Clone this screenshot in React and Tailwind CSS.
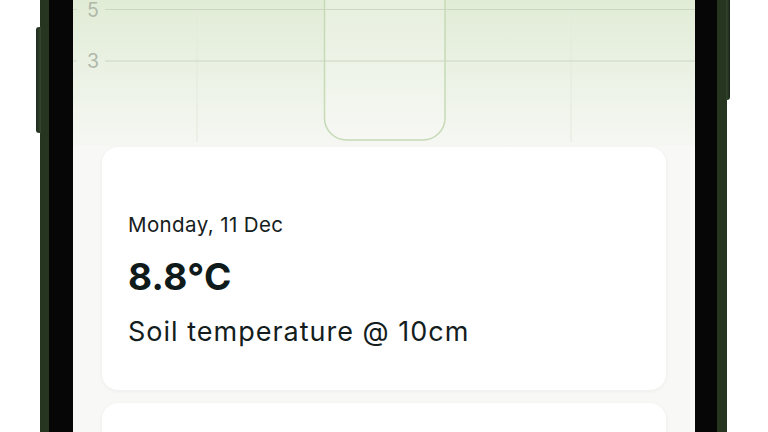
import React from 'react'

const GRID_Y = [
  { y: 9.5, label: '5' },
  { y: 61, label: '3' },
]

function SoilChart() {
  return (
    <div className="h-[146px] bg-gradient-to-b from-[#e1ecd6] via-[#ebf2e5] via-50% to-[#f6f7f3]">
      <svg width="622" height="146" viewBox="0 0 622 146" className="block">
        {/* vertical grid */}
        <line x1="124" y1="0" x2="124" y2="142" stroke="#e2ebda" strokeWidth="1" />
        <line x1="498" y1="0" x2="498" y2="142" stroke="#e2ebda" strokeWidth="1" />

        {/* selected bar */}
        <path
          d="M251.5 -2 V118 A22 22 0 0 0 273.5 140 H350 A22 22 0 0 0 372 118 V-2"
          fill="rgba(255,255,255,0.2)"
          stroke="#c6dab5"
          strokeWidth="1.5"
        />

        {/* horizontal grid + labels */}
        {GRID_Y.map((g) => (
          <g key={g.label}>
            <line x1="0" y1={g.y} x2="4" y2={g.y} stroke="#cfdac8" strokeWidth="1" />
            <line x1="32" y1={g.y} x2="622" y2={g.y} stroke="#cad7c1" strokeWidth="1" />
            <text
              x="20"
              y={g.y + 7}
              textAnchor="middle"
              fontSize="19.5"
              fontFamily="Inter, 'Noto Sans', sans-serif"
              fill="#b0b8ab"
            >
              {g.label}
            </text>
          </g>
        ))}
      </svg>
    </div>
  )
}

function ReadingCard() {
  return (
    <div className="rounded-[16px] bg-white h-[243px] px-[26px] pt-[66px] shadow-[0_1px_4px_rgba(0,0,0,0.05)]">
      <p className="text-[20.5px] leading-[24px] tracking-[0.4px] text-[#152020]">Monday, 11 Dec</p>
      <p className="mt-[18px] text-[37px] leading-[44px] font-bold tracking-[0.3px] text-[#0f1a1a]">8.8°C</p>
      <p className="mt-[17px] text-[27px] leading-[32px] tracking-[1px] text-[#131d1d]">Soil temperature @ 10cm</p>
    </div>
  )
}

export default function App() {
  return (
    <div
      className="relative w-[768px] h-[432px] overflow-hidden bg-white"
      style={{ fontFamily: "Inter, 'Noto Sans', sans-serif" }}
    >
      {/* side buttons */}
      <div className="absolute left-[36px] top-[27px] w-[5px] h-[106px] rounded-l-[3px] bg-gradient-to-r from-[#1f2b1d] to-[#34482f]" />
      <div className="absolute left-[726px] top-[-10px] w-[4px] h-[110px] rounded-r-[3px] bg-gradient-to-r from-[#34482f] to-[#1a2418]" />

      {/* phone body */}
      <div className="ml-[40px] w-[687px] h-[520px] flex bg-gradient-to-r from-[#26351f] via-[#415a3a] to-[#26351f] px-[9px] pr-[10px]">
        <div className="flex-1 flex bg-[#060606] pl-[24px] pr-[22px]">
          {/* screen */}
          <div className="flex-1 bg-[#f8f8f7]">
            <SoilChart />
            <div className="px-[29px] pt-[1px] flex flex-col gap-[13px]">
              <ReadingCard />
              <div className="rounded-[16px] bg-white h-[200px] shadow-[0_1px_4px_rgba(0,0,0,0.05)]" />
            </div>
          </div>
        </div>
      </div>
    </div>
  )
}
